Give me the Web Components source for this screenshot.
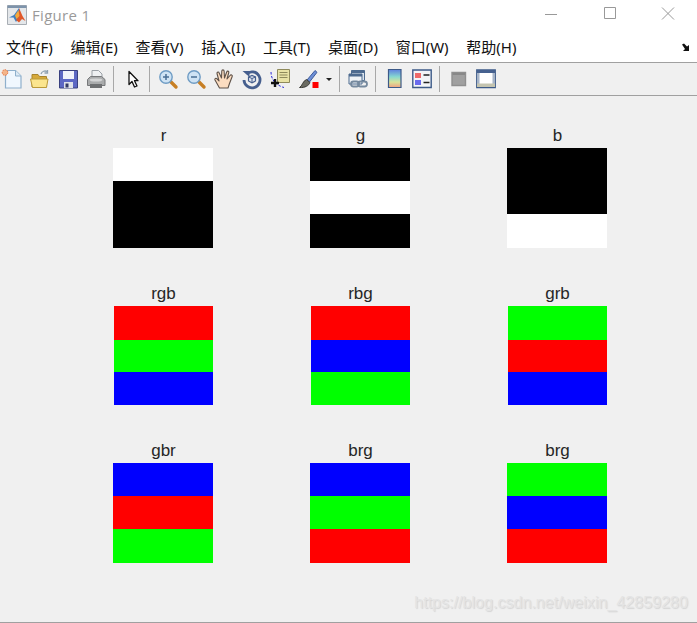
<!DOCTYPE html>
<html lang="zh">
<head>
<meta charset="utf-8">
<title>Figure 1</title>
<style>
  html, body { margin: 0; height: 100%; }
  body { background: #f0f0f0; width: 697px; height: 623px; overflow: hidden; }
</style>
</head>
<body>
<figure-window>
  <title-bar slot="title" caption="Figure 1"></title-bar>
  <menu-bar slot="menu">
    <menu-item>文件(F)</menu-item>
    <menu-item>编辑(E)</menu-item>
    <menu-item>查看(V)</menu-item>
    <menu-item>插入(I)</menu-item>
    <menu-item>工具(T)</menu-item>
    <menu-item>桌面(D)</menu-item>
    <menu-item>窗口(W)</menu-item>
    <menu-item>帮助(H)</menu-item>
  </menu-bar>
  <tool-bar slot="tools"></tool-bar>
  <plot-grid>
    <plot-axes label="r" bands="#fff,#000,#000"></plot-axes>
    <plot-axes label="g" bands="#000,#fff,#000"></plot-axes>
    <plot-axes label="b" bands="#000,#000,#fff"></plot-axes>
    <plot-axes label="rgb" bands="#f00,#0f0,#00f" inset></plot-axes>
    <plot-axes label="rbg" bands="#f00,#00f,#0f0" inset></plot-axes>
    <plot-axes label="grb" bands="#0f0,#f00,#00f" inset></plot-axes>
    <plot-axes label="gbr" bands="#00f,#f00,#0f0"></plot-axes>
    <plot-axes label="brg" bands="#00f,#0f0,#f00"></plot-axes>
    <plot-axes label="brg" bands="#0f0,#00f,#f00"></plot-axes>
  </plot-grid>
</figure-window>

<script>
// one svg per toolbar button, all drawn on a 20x20 box
const ICONS = {
  "new": `<path d="M3.500 1.500h10l5.500 5.500v12H3.500z" fill="#f0f7fe" stroke="#8fb0cc" stroke-width="1.200"/><path d="M13.500 1.500V7H19" fill="#dce9f4" stroke="#8fb0cc"/><circle cx="3" cy="3.500" r="2.800" fill="#f3b58a" stroke="#e8703a" stroke-dasharray="1.500 1"/>`,
  "open": `<path d="M2 8V5.500h6l1.500 2h7V18H2z" fill="#d6a93a" stroke="#a8842c"/><path d="M2.500 18.500L.5 10h17.500l-1.500 8.500z" fill="#fbe58e" stroke="#bb9a3a"/><path d="M11 5c1-3 4-3.500 6-2.500M17.500 1v3h-3" fill="none" stroke="#8ea0b0" stroke-width="1.300"/>`,
  "save": `<path d="M.500 1.500h18v17.500H.500z" fill="#5d68c4" stroke="#39407f"/><path d="M4 2h11v8H4z" fill="#f1f3fb"/><path d="M5 13h9v6H5z" fill="#dfe2ea"/><path d="M6.500 14.500h3v4h-3z" fill="#333a66"/>`,
  "print": `<path d="M5 8V1.500h6.500L15 5v3z" fill="#eef0f2" stroke="#9aa0a6"/><path d="M.500 10.500l3-3h11l3.500 3v6H.500z" fill="#a9abac" stroke="#77797b"/><path d="M3 15h12v4H3z" fill="#6e7072"/><ellipse cx="9" cy="11" rx="6.500" ry="1.600" fill="#d4d5d6"/>`,
  "pointer": `<path d="M6 2.500v13l3-3 2.500 5.500 2.500-1-2.500-5.300H15z" fill="#fff" stroke="#111" stroke-width="1.300" stroke-linejoin="round"/>`,
  "zoomin": `<path d="M12.500 12.500l5.500 5.500" stroke="#c77f24" stroke-width="3.400" stroke-linecap="round"/><circle cx="8" cy="8" r="6.200" fill="#cfe3f4" stroke="#6f9cc4" stroke-width="1.400"/><path d="M5 8h6M8 5v6" stroke="#4a6f95" stroke-width="1.500"/>`,
  "zoomout": `<path d="M12.500 12.500l5.500 5.500" stroke="#c77f24" stroke-width="3.400" stroke-linecap="round"/><circle cx="8" cy="8" r="6.200" fill="#cfe3f4" stroke="#6f9cc4" stroke-width="1.400"/><path d="M5 8h6" stroke="#4a6f95" stroke-width="1.500"/>`,
  "hand": `<path d="M5.500 19L1 11c-.7-1.500 1-2.300 2-1.200L5 12 3 4.500c-.3-1.600 1.800-2 2.200-.5L7.500 9 7.800 2c.1-1.500 2.200-1.500 2.300 0L10.500 9l2.200-6c.4-1.500 2.400-1 2.100.5L13 10l3-3.500c.9-1.300 2.800-.4 2.200 1L15.500 14.500l-1.500 4.500z" fill="#fbdcc0" stroke="#5d5148" stroke-width="1.100" stroke-linejoin="round"/>`,
  "rotate": `<path d="M4.500 5A8 8 0 1 1 2 11" fill="none" stroke="#465f8e" stroke-width="2.800"/><path d="M.500 2h7v6z" fill="#465f8e"/><path d="M6.500 8l3.500-1.500L13.500 8v4L10 13.800 6.500 12z" fill="#dfe5ee" stroke="#465f8e" stroke-width="1.200"/><path d="M6.500 8L10 9.500 13.500 8M10 9.500v4.300" fill="none" stroke="#465f8e"/>`,
  "cursor": `<path d="M7.500 .5h12v13h-12z" fill="#e9e3a6" stroke="#8f8a5c"/><path d="M9.500 3.500h8M9.500 6h8M9.500 8.500h8" stroke="#8f8a5c"/><path d="M1 3c0 7 4 13 13 15.500" fill="none" stroke="#2b2bd8" stroke-dasharray="2.500 1.500"/><path d="M1 14h8M5 10v8" stroke="#111" stroke-width="2.400"/>`,
  "brush": `<path d="M9 11l8-9.500 2 1.800L11.500 13z" fill="#6d8fd6" stroke="#3d5a9a"/><path d="M8.500 10.500l3.500 3c-1 3-5 5.500-10.500 5 3-1.500 3-6.500 7-8z" fill="#6b6b62" stroke="#3b3b36"/><path d="M14.500 13h6v6h-6z" fill="#f00"/>`,
  "link": `<path d="M3.500 1.500h13v10h-13z" fill="#dbe4ee" stroke="#4d6a8f"/><path d="M3.500 1.500h13v2.500h-13z" fill="#4d6a8f"/><path d="M1 5h13v10H1z" fill="#eef2f6" stroke="#4d6a8f"/><path d="M1 5h13v2.500H1z" fill="#4d6a8f"/><rect x="3" y="12.500" width="8" height="5" rx="2.500" fill="none" stroke="#75899e" stroke-width="1.800"/><rect x="10" y="12.500" width="9" height="5" rx="2.500" fill="none" stroke="#75899e" stroke-width="1.800"/>`,
  "colorbar": `<defs><linearGradient id="cb" x1="0" y1="0" x2="0" y2="1"><stop offset="0" stop-color="#5f7fe0"/><stop offset=".4" stop-color="#86d8d0"/><stop offset=".7" stop-color="#d8e49a"/><stop offset="1" stop-color="#f0a080"/></linearGradient></defs><path d="M3.500 .5h12.500v18H3.500z" fill="url(#cb)" stroke="#3c5a88" stroke-width="1.200"/>`,
  "legend": `<path d="M.8 1h18.400v17.500H.8z" fill="#f3f5f8" stroke="#3c5a88" stroke-width="1.400"/><path d="M3 4h6v5H3z" fill="#ee6a6a"/><path d="M3 11h6v5H3z" fill="#6a6aee"/><path d="M11.500 6h6M11.500 13.500h6" stroke="#222" stroke-width="1.400"/>`,
  "square": `<path d="M2 3.500h13.500v13H2z" fill="#a0a0a0" stroke="#8f8f8f" stroke-width="1.400"/><path d="M2.500 4h12.500v2H2.500z" fill="#888"/>`,
  "frame": `<path d="M.8 1h18.400v17.500H.8z" fill="#fff" stroke="#3c5a88" stroke-width="1.400"/><path d="M1 1h18v3H1z" fill="#46618f"/><path d="M1 4h2.500v14H1zM16.500 4H19v14h-2.500z" fill="#a6b4c8"/><path d="M1 14.500h18v3.500H1z" fill="#c4c4b0"/>`
};

class FigureWindow extends HTMLElement {
  constructor() {
    super();
    const shadow = this.attachShadow({ mode: "open" });
    shadow.innerHTML = `
    <style>
      :host {
        display: flex;
        flex-direction: column;
        width: 697px;
        height: 623px;
        box-sizing: border-box;
        background: #f0f0f0;
        border-bottom: 1px solid #a0a0a0;
      }
      .chrome { background: #fff; }
    </style>
    <div class="chrome">
      <slot name="title"></slot>
      <slot name="menu"></slot>
    </div>
    <slot name="tools"></slot>
    <slot></slot>`;
  }
}
customElements.define("figure-window", FigureWindow);

class TitleBar extends HTMLElement {
  constructor() {
    super();
    const shadow = this.attachShadow({ mode: "open" });
    shadow.innerHTML = `
    <style>
      :host {
        display: flex;
        align-items: center;
        height: 32px;
        font: 15px "Open Sans", "Noto Sans", sans-serif;
        color: #9a9a9a;
        letter-spacing: .3px;
      }
      .logo { width: 20px; height: 20px; margin: -2px 5px 0 7px; flex: none; }
      .caption { flex: 1; padding-bottom: 3px; }
      .btn { width: 20px; height: 20px; flex: none; }
      .btn + .btn { margin-left: 38px; }
      .btns { display: flex; margin-right: 18px; margin-top: -5px; }
    </style>
    <svg class="logo" viewBox="0 0 20 20">
      <path d="M.5 .5h19v19H.5z" fill="#e4e7ea" stroke="#a8aeb4"/>
      <path d="M.5 .5h19v2.500H.5z" fill="#7d93ab"/>
      <path d="M2 12.500l5-2.500 5-7 1 8-4 6-2.500-4.500z" fill="#3f7fc0"/>
      <path d="M12 3l3.500 8 3 5-3.500-2-3 3.500-3-2.500 3-4z" fill="#e0582a"/>
      <path d="M11.500 5l1 6-3 3-1.500-3.500z" fill="#f5a83a"/>
    </svg>
    <span class="caption"></span>
    <div class="btns">
      <svg class="btn" viewBox="0 0 20 20"><path d="M2 10.500h12" stroke="#999"/></svg>
      <svg class="btn" viewBox="0 0 20 20"><path d="M3.500 3.500h11v11h-11z" fill="none" stroke="#999"/></svg>
      <svg class="btn" viewBox="0 0 20 20"><path d="M3 3.500l12 12M15 3.500l-12 12" stroke="#999"/></svg>
    </div>`;
    shadow.querySelector(".caption").textContent = this.getAttribute("caption");
  }
}
customElements.define("title-bar", TitleBar);

class MenuBar extends HTMLElement {
  constructor() {
    super();
    const shadow = this.attachShadow({ mode: "open" });
    shadow.innerHTML = `
    <style>
      :host {
        display: flex;
        align-items: center;
        height: 30px;
        padding: 0 5px 0 6px;
        border-bottom: 1px solid #a0a0a0;
        font: 15px "Noto Sans", "Noto Sans CJK SC", sans-serif;
        color: #111;
      }
      .items { display: flex; flex: 1; gap: 17.700px; padding-bottom: 2px; }
      svg { width: 11px; height: 9px; }
    </style>
    <div class="items"><slot></slot></div>
    <svg viewBox="0 0 11 9"><path d="M1 1.500l2-1 3 3 2-1.500v6H2l2-2z" fill="#111"/></svg>`;
  }
}
customElements.define("menu-bar", MenuBar);

class MenuItem extends HTMLElement {
  constructor() {
    super();
    const shadow = this.attachShadow({ mode: "open" });
    shadow.innerHTML = `<style>:host { display: block; white-space: nowrap; }</style><slot></slot>`;
  }
}
customElements.define("menu-item", MenuItem);

class ToolIcon extends HTMLElement {
  constructor() {
    super();
    const shadow = this.attachShadow({ mode: "open" });
    const w = this.getAttribute("w") || 20;
    shadow.innerHTML = `
    <style>
      :host { display: block; width: ${w}px; height: 20px; flex: none; }
      svg { display: block; width: 100%; height: 100%; overflow: visible; }
    </style>
    <svg viewBox="0 0 ${w} 20">${ICONS[this.getAttribute("name")]}</svg>`;
  }
}
customElements.define("tool-icon", ToolIcon);

class ToolBar extends HTMLElement {
  constructor() {
    super();
    const shadow = this.attachShadow({ mode: "open" });
    shadow.innerHTML = `
    <style>
      :host {
        display: flex;
        align-items: center;
        height: 32px;
        padding-left: 2px;
        border-bottom: 1px solid #a0a0a0;
        background: #f0f0f0;
      }
      .sep { width: 1px; height: 26px; background: #a8a8a8; flex: none; }
      .arrow {
        width: 0; height: 0; flex: none; margin: 0 7px 0 6px;
        border: 3px solid transparent; border-top: 3px solid #222; border-bottom: 0;
      }
      tool-icon { margin-right: 8px; }
      .tight { margin-right: 0; }
    </style>
    <tool-icon name="new"></tool-icon>
    <tool-icon name="open"></tool-icon>
    <tool-icon name="save" style="margin-left:1px"></tool-icon>
    <tool-icon name="print" style="margin-right:6px"></tool-icon>
    <div class="sep"></div>
    <tool-icon name="pointer" style="margin-left:9px"></tool-icon>
    <div class="sep" style="margin-left:-2px"></div>
    <tool-icon name="zoomin" style="margin-left:8px"></tool-icon>
    <tool-icon name="zoomout"></tool-icon>
    <tool-icon name="hand"></tool-icon>
    <tool-icon name="rotate"></tool-icon>
    <tool-icon name="cursor"></tool-icon>
    <tool-icon name="brush" class="tight" w="22"></tool-icon>
    <div class="arrow"></div>
    <div class="sep"></div>
    <tool-icon name="link" style="margin-left:8px"></tool-icon>
    <div class="sep" style="margin-left:-1px"></div>
    <tool-icon name="colorbar" style="margin-left:9px"></tool-icon>
    <tool-icon name="legend" style="margin-left:-1px"></tool-icon>
    <div class="sep" style="margin-left:-1px"></div>
    <tool-icon name="square" style="margin-left:10px"></tool-icon>
    <tool-icon name="frame" style="margin-left:-2px"></tool-icon>`;
  }
}
customElements.define("tool-bar", ToolBar);

class PlotGrid extends HTMLElement {
  constructor() {
    super();
    const shadow = this.attachShadow({ mode: "open" });
    shadow.innerHTML = `
    <style>
      :host {
        display: block;
        position: relative;
        flex: 1;
        padding: 32px 0 0 113px;
        background: #f0f0f0;
      }
      .grid {
        display: grid;
        grid-template-columns: repeat(3, 100px);
        grid-auto-rows: 120px;
        column-gap: 97px;
        row-gap: 37.500px;
      }
      .mark {
        position: absolute;
        right: 9px;
        bottom: 10px;
        font: 16.100px "Liberation Sans", sans-serif;
        color: #e4e4e4;
        text-shadow: 1px 1px 1px #d4d4d4;
      }
    </style>
    <div class="grid"><slot></slot></div>
    <div class="mark">https://blog.csdn.net/weixin_42859280</div>`;
  }
}
customElements.define("plot-grid", PlotGrid);

class PlotAxes extends HTMLElement {
  constructor() {
    super();
    const shadow = this.attachShadow({ mode: "open" });
    const bands = this.getAttribute("bands").split(",");
    shadow.innerHTML = `
    <style>
      :host {
        display: grid;
        grid-template-rows: 20px 100px;
        font: 17px "Liberation Sans", sans-serif;
        color: #262626;
      }
      .label { text-align: center; line-height: 16px; padding-left: 1px; white-space: nowrap; }
      .image { display: grid; grid-template-rows: 33px 33px 1fr; }
      :host([inset]) .image { margin-left: 1px; height: 99px; grid-template-rows: 34.500px 32px 1fr; }
    </style>
    <div class="label"></div>
    <div class="image">${bands.map(c => `<div style="background:${c}"></div>`).join("")}</div>`;
    shadow.querySelector(".label").textContent = this.getAttribute("label");
  }
}
customElements.define("plot-axes", PlotAxes);
</script>
</body>
</html>
